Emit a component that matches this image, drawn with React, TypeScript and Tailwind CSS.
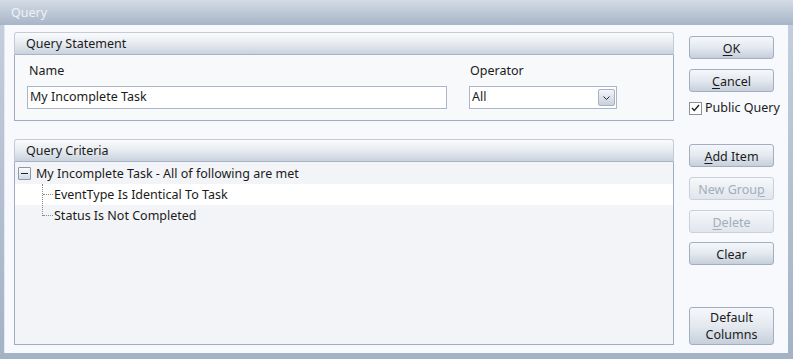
import React from "react";

const font = { fontFamily: '"Noto Sans", "Open Sans", sans-serif' };

function Btn({ label, ul, disabled, tall }: { label: string; ul?: number; disabled?: boolean; tall?: boolean }) {
  const chars = label.split("");
  return (
    <div
      className={`flex flex-col items-center justify-center text-center rounded-[3px] border leading-[17px] ${
        tall ? "h-[38px]" : "h-[23px] pt-[1px]"
      } ${
        disabled
          ? "border-[#c9d1dc] bg-gradient-to-b from-[#f6f8fa] to-[#e1e6ed] text-[#a3adbb]"
          : "border-[#a3afc0] bg-gradient-to-b from-[#f5f7fa] via-[#e4e9ef] to-[#c6cfdb] text-[#1b1b1b]"
      }`}
    >
      {ul === undefined ? (
        label.split("\n").map((l, i) => <div key={i}>{l}</div>)
      ) : (
        <div>
          {chars.map((c, i) =>
            i === ul ? (
              <u key={i} className="underline-offset-2">
                {c}
              </u>
            ) : (
              <span key={i}>{c}</span>
            )
          )}
        </div>
      )}
    </div>
  );
}

function GroupHeader({ title }: { title: string }) {
  return (
    <div className="h-[23px] flex items-center pl-[11px] pt-[1px] rounded-t-[3px] border border-[#c3cbd7] border-b-[#a6b3c5] bg-gradient-to-b from-[#fafbfc] via-[#e7ebf0] to-[#c9d2de] text-[#1b1b1b]">
      {title}
    </div>
  );
}

export default function App() {
  return (
    <div
      className="w-[793px] h-[359px] flex flex-col bg-gradient-to-b from-[#c6d0dd] to-[#a4b2c6] text-[12.5px]"
      style={font}
    >
      <div className="h-[25px] flex items-center pl-[11px] pt-[2px] text-[#eef2f6] bg-gradient-to-b from-[#d4dce6] to-[#a7b5c8] shrink-0">
        Query
      </div>
      <div className="flex-1 flex ml-[4px] mr-[5px] mb-[6px] bg-[#f7f9fc] border-l border-[#e4e9ef] pl-[9px] pr-[14px] pt-[7px] pb-[8px]">
        <div className="w-[660px] flex flex-col">
          <div className="h-[89px] flex flex-col">
            <GroupHeader title="Query Statement" />
            <div className="flex-1 border border-t-0 border-[#a0adc0] bg-[#f7f9fb] flex px-[12px] pt-[7px] gap-[22px]">
              <div className="flex flex-col w-[420px]">
                <div className="h-[18px] pl-[2px] leading-[18px] text-[#1b1b1b]">Name</div>
                <div className="mt-[6px] h-[23px] border border-[#abb7c8] bg-white flex items-center pl-[2px] text-[#1b1b1b]">
                  My Incomplete Task
                </div>
              </div>
              <div className="flex flex-col w-[148px]">
                <div className="h-[18px] pl-[1px] leading-[18px] text-[#1b1b1b]">Operator</div>
                <div className="mt-[6px] h-[23px] border border-[#abb7c8] bg-white flex items-center justify-between pl-[2px] pr-[1px] text-[#1b1b1b]">
                  <span>All</span>
                  <div className="w-[17px] h-[17px] rounded-[2px] border border-[#a6b1c1] bg-gradient-to-b from-[#f3f5f8] to-[#c9d1dc] flex items-center justify-center">
                    <svg width="7" height="4" viewBox="0 0 7 4">
                      <path d="M0.5 0.5 L3.5 3.5 L6.5 0.5" fill="none" stroke="#2a2a2a" strokeWidth="1" />
                    </svg>
                  </div>
                </div>
              </div>
            </div>
          </div>
          <div className="mt-[18px] flex-1 flex flex-col">
            <GroupHeader title="Query Criteria" />
            <div className="flex-1 border border-t-0 border-[#a0adc0] bg-[#f3f4f7] text-[#1b1b1b] pt-[1px]">
              <div className="h-[21px] flex items-center pl-[3px]">
                <div className="w-[13px] h-[13px] border border-[#8c98aa] rounded-[1px] bg-gradient-to-b from-[#fbfcfd] to-[#d3d9e2] flex items-center justify-center">
                  <div className="w-[7px] h-[1px] bg-[#222]" />
                </div>
                <span className="ml-[5px] pt-[1px]">My Incomplete Task - All of following are met</span>
              </div>
              <div className="h-[21px] flex items-center bg-white relative">
                <div className="absolute left-[27px] top-0 h-[32px] border-l border-dotted border-[#8a8a8a]" />
                <div className="ml-[28px] w-[10px] border-t border-dotted border-[#8a8a8a]" />
                <span className="ml-[1px] pt-[1px]">EventType Is Identical To Task</span>
              </div>
              <div className="h-[21px] flex items-center">
                <div className="ml-[28px] w-[10px] border-t border-dotted border-[#8a8a8a]" />
                <span className="ml-[1px] pt-[1px]">Status Is Not Completed</span>
              </div>
            </div>
          </div>
        </div>
        <div className="ml-[15px] w-[85px] flex flex-col">
          <div className="mt-[4px]">
            <Btn label="OK" ul={0} />
          </div>
          <div className="mt-[10px]">
            <Btn label="Cancel" ul={0} />
          </div>
          <div className="mt-[9px] h-[14px] flex items-center text-[#1b1b1b]">
            <div className="w-[13px] h-[13px] shrink-0 border border-[#8e8f8f] bg-white flex items-center justify-center">
              <svg width="9" height="8" viewBox="0 0 9 8">
                <path d="M1 4 L3.3 6.4 L8 1" fill="none" stroke="#222" strokeWidth="1.4" />
              </svg>
            </div>
            <span className="ml-[3px] whitespace-nowrap">Public Query</span>
          </div>
          <div className="mt-[29px]">
            <Btn label="Add Item" ul={0} />
          </div>
          <div className="mt-[10px]">
            <Btn label="New Group" ul={8} disabled />
          </div>
          <div className="mt-[10px]">
            <Btn label="Delete" ul={0} disabled />
          </div>
          <div className="mt-[9px]">
            <Btn label="Clear" />
          </div>
          <div className="flex-1" />
          <Btn label={"Default\nColumns"} tall />
        </div>
      </div>
    </div>
  );
}
